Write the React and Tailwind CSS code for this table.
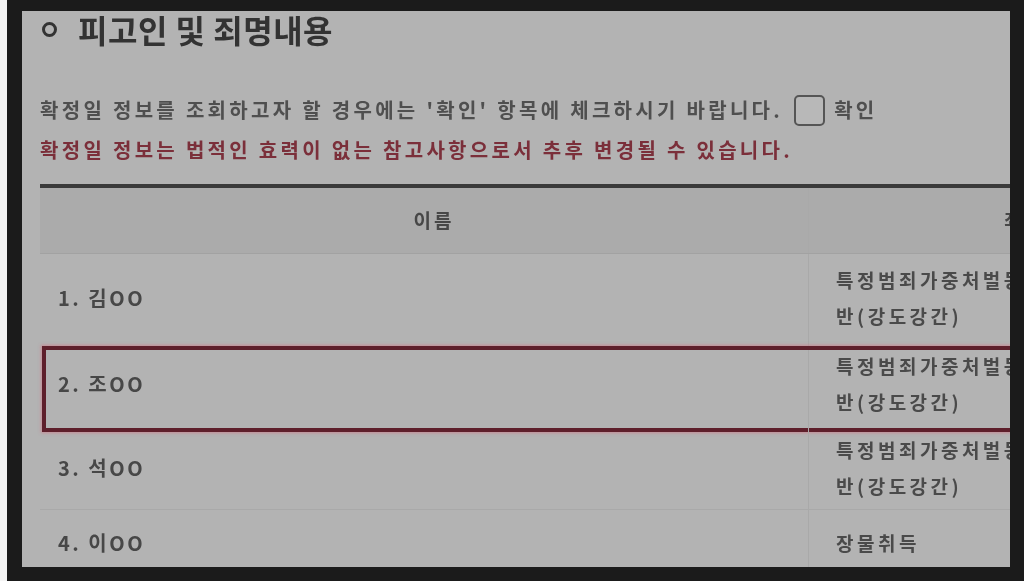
import React from "react";

const font = { fontFamily: '"Noto Sans CJK KR", "Noto Sans", sans-serif' };

function Row({ name, lines, className = "", children }) {
  return (
    <div className={`relative grid grid-cols-[768px_432px] ${className}`}>
      <div className="flex items-center pl-[18px] text-[20px] tracking-[2.5px] text-[#474747] font-semibold">
        {name}
      </div>
      <div className="flex flex-col justify-center border-l border-[#a9a9a9] pl-[27px] text-[19px] leading-[36px] tracking-[3.5px] text-[#4a4a4a] font-semibold whitespace-nowrap">
        {lines.map((l, i) => (
          <div key={i}>{l}</div>
        ))}
      </div>
      {children}
    </div>
  );
}

export default function App() {
  return (
    <div className="w-[1024px] h-[581px] flex bg-[#1b1b1b] overflow-hidden" style={font}>
      <div className="w-[7px] shrink-0 h-full bg-[#f4f4f4]" />
      <div className="w-[1003px] shrink-0 min-w-0 pt-[11px] pl-[15px] pb-[14px]">
        <div className="w-[988px] h-full bg-[#b3b3b3] overflow-hidden pl-[18px] pt-[1px] blur-[0.6px]">
          {/* Title */}
          <div className="flex items-center h-[34px]">
            <div className="ml-[2px] w-[15px] h-[15px] shrink-0 rounded-full border-[3px] border-[#333]" />
            <div className="ml-[21px] text-[32px] font-bold leading-[34px] tracking-[0.5px] text-[#333] whitespace-nowrap">
              피고인 및 죄명내용
            </div>
          </div>

          {/* Notices */}
          <div className="mt-[44px] flex items-center h-[40px] text-[20px] tracking-[3.3px] text-[#4f4f4f] font-semibold whitespace-nowrap">
            <span>확정일 정보를 조회하고자 할 경우에는 '확인' 항목에 체크하시기 바랍니다.</span>
            <span className="ml-[11px] w-[31px] h-[31px] shrink-0 rounded-[5px] border-2 border-[#555] bg-[#b8b8b8]" />
            <span className="ml-[9px]">확인</span>
          </div>
          <div className="h-[40px] leading-[40px] text-[20px] tracking-[3.3px] text-[#7b2f3a] font-semibold whitespace-nowrap">
            확정일 정보는 법적인 효력이 없는 참고사항으로서 추후 변경될 수 있습니다.
          </div>

          {/* Table */}
          <div className="mt-[14px] w-[1200px] border-t-[4px] border-[#3a3a3a]">
            <div className="grid grid-cols-[768px_432px] h-[66px] bg-[#ababab] border-b border-[#a2a2a2] text-[19px] tracking-[3px] text-[#474747] font-semibold">
              <div className="flex items-center justify-center pl-[20px]">이름</div>
              <div className="flex items-center justify-center border-l border-[#a9a9a9]">죄명</div>
            </div>
            <Row className="h-[88px]" name="1. 김OO" lines={["특정범죄가중처벌등에관한", "반(강도강간)"]} />
            <Row className="h-[84px]" name="2. 조OO" lines={["특정범죄가중처벌등에관한", "반(강도강간)"]}>
              <div className="absolute top-[4px] bottom-[-6px] left-[2px] right-[-10px] border-[4px] border-[#5e1f2b] shadow-[0_0_3px_1px_rgba(205,120,135,0.7)]" />
            </Row>
            <Row className="h-[84px] border-b border-[#a9a9a9]" name="3. 석OO" lines={["특정범죄가중처벌등에관한", "반(강도강간)"]} />
            <Row className="h-[66px]" name="4. 이OO" lines={["장물취득"]} />
          </div>
        </div>
      </div>
    </div>
  );
}
